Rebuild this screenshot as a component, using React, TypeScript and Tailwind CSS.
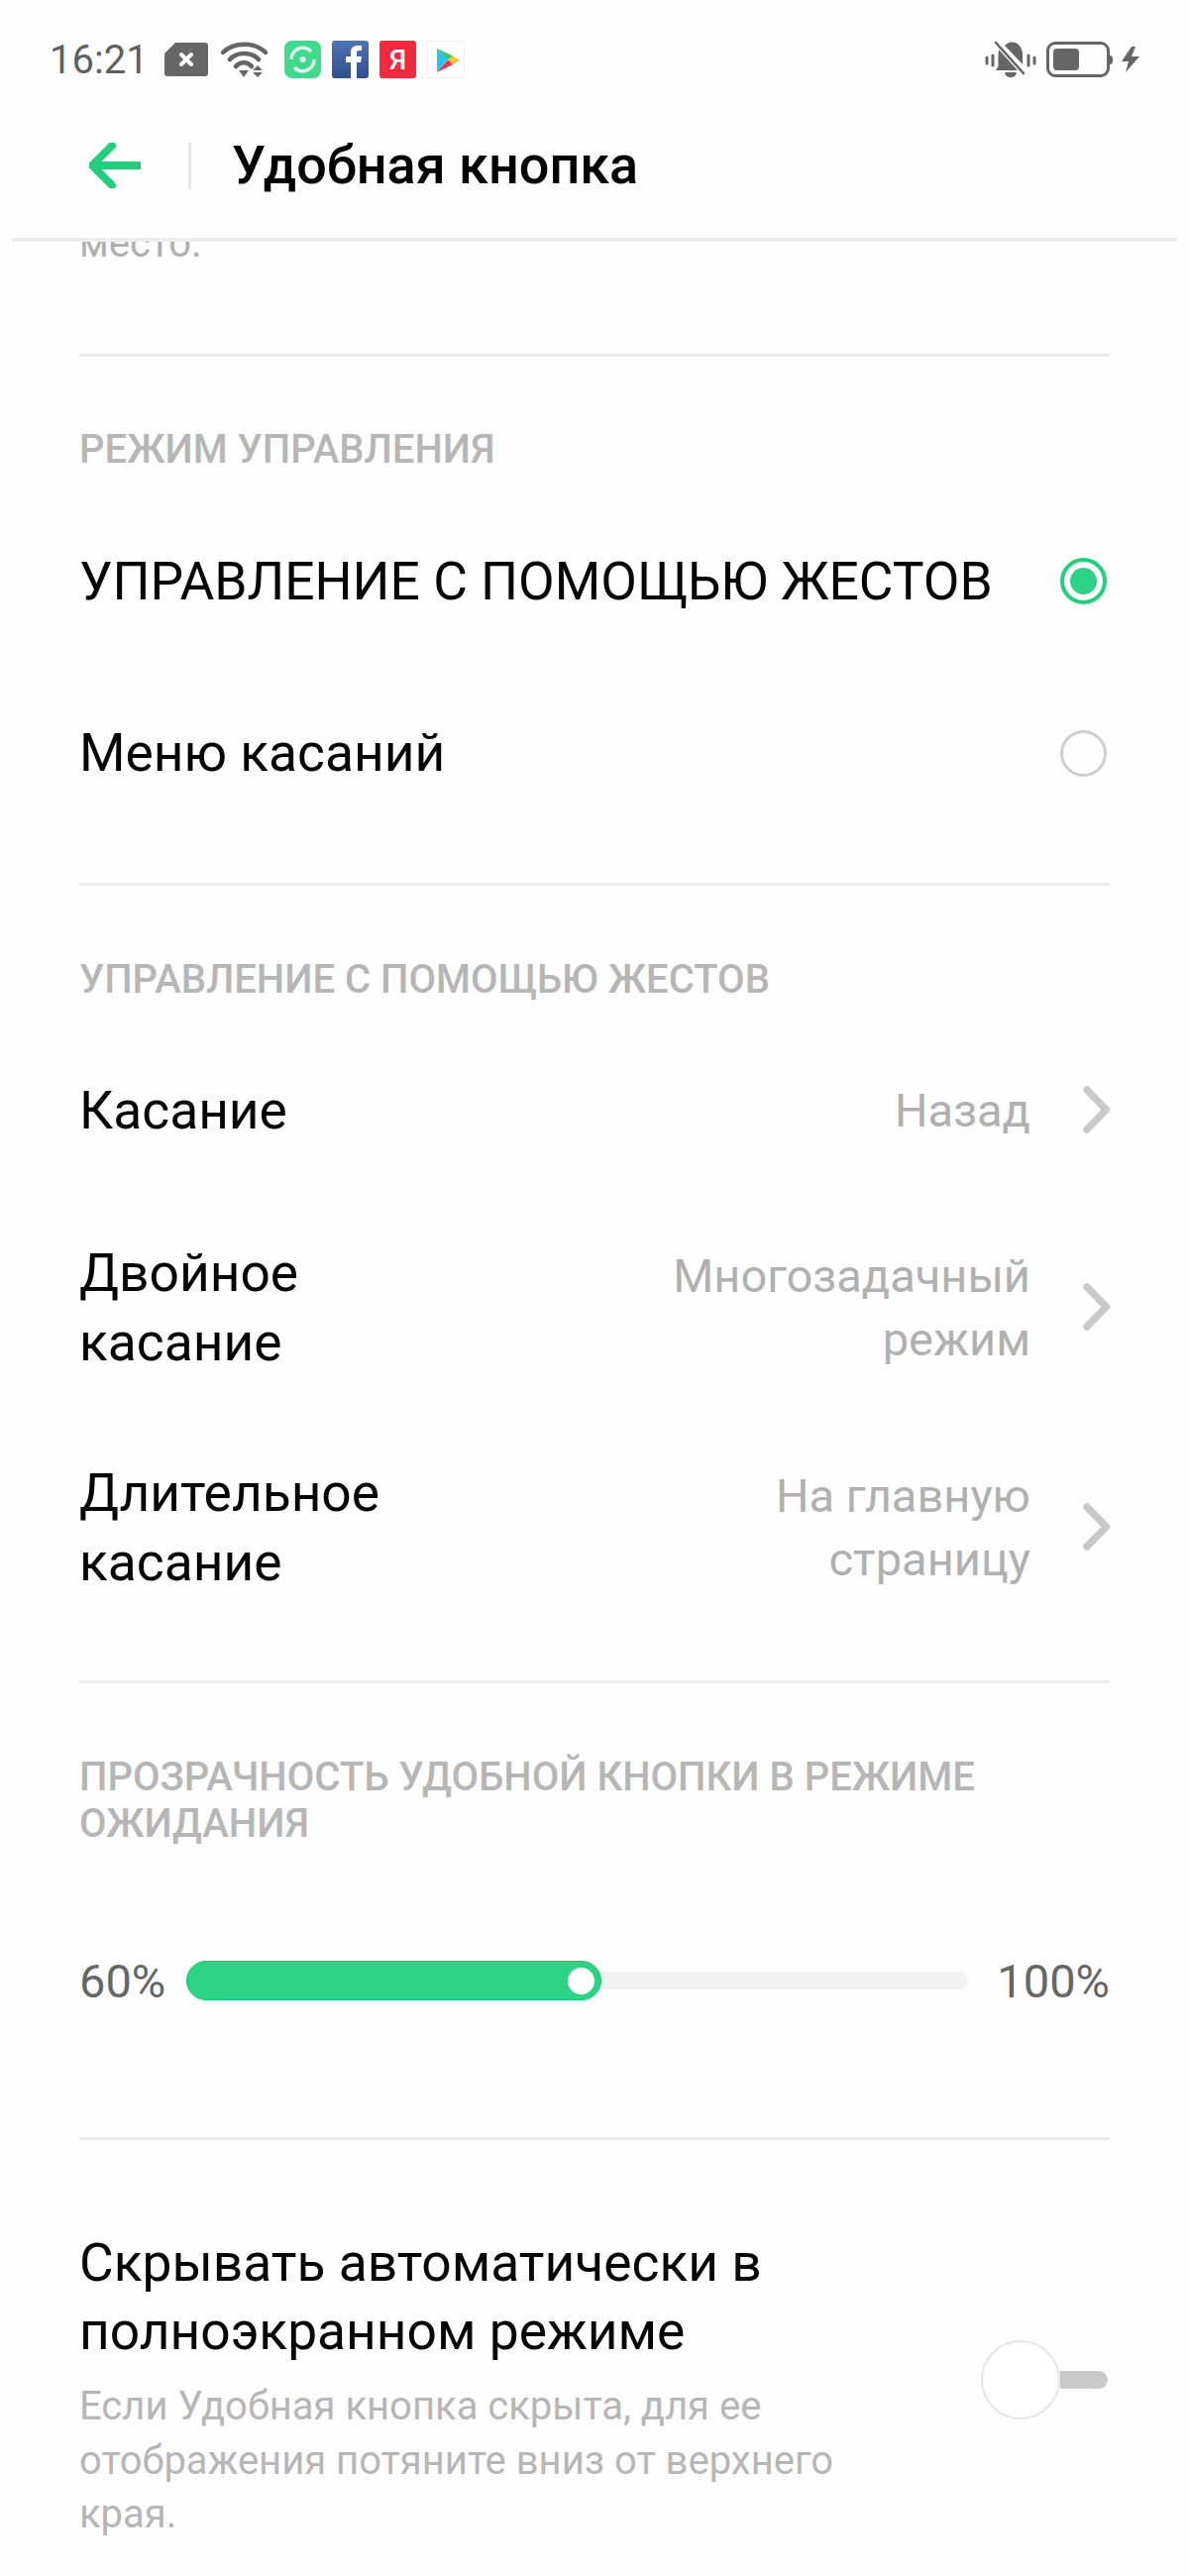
import React from "react";

const font = { fontFamily: "Roboto, 'Noto Sans', sans-serif" };

const Divider = () => <div className="h-[3px] mx-[80px] bg-[#ececec]" />;

const SectionTitle = ({ children }: { children: React.ReactNode }) => (
  <div className="px-[80px] text-[40px] leading-[47px] font-medium text-[#b6b6b6]">{children}</div>
);

const Chevron = () => (
  <svg width="28" height="48" viewBox="0 0 28 48" className="shrink-0">
    <path d="M4 4 L23.5 24 L4 44" fill="none" stroke="#c9c9c9" strokeWidth="7.5" strokeLinecap="round" strokeLinejoin="round" />
  </svg>
);

const Radio = ({ on }: { on?: boolean }) =>
  on ? (
    <div className="w-[47px] h-[47px] rounded-full border-[4px] border-[#1fd07f] flex items-center justify-center">
      <div className="w-[27px] h-[27px] rounded-full bg-[#2dd384]" />
    </div>
  ) : (
    <div className="w-[47px] h-[47px] rounded-full border-[3px] border-[#cecece]" />
  );

const StatusIcons = () => (
  <div className="flex items-center">
    {/* sim */}
    <svg width="44" height="34" viewBox="0 0 44 34" className="ml-[16px]">
      <path d="M11 0 H41 A3 3 0 0 1 44 3 V31 A3 3 0 0 1 41 34 H3 A3 3 0 0 1 0 31 V11 Z" fill="#666" />
      <path d="M17 12 L27 22 M27 12 L17 22" stroke="#fff" strokeWidth="4" strokeLinecap="round" />
    </svg>
    {/* wifi */}
    <svg width="47" height="37" viewBox="0 0 47 37" className="ml-[13px]">
      <g fill="none" stroke="#666" strokeWidth="4.5" strokeLinecap="round">
        <path d="M2 11 C13 0 34 0 45 11" />
        <path d="M9 18 C16 10 31 10 38 18" />
        <path d="M15 25 C19 20 27 20 31 25" />
      </g>
      <path d="M18 29 H28 L23 36 Z" fill="#666" />
      <path d="M37 24 L42 29 H32 Z M32 31 H42 L37 36 Z" fill="#666" />
    </svg>
    {/* sync app */}
    <svg width="37" height="38" viewBox="0 0 37 38" className="ml-[17px]">
      <rect width="37" height="38" rx="8" fill="#3fdb8b" />
      <path d="M7 19 A11.5 11.5 0 0 1 27 11" fill="none" stroke="#e4fbef" strokeWidth="3.5" />
      <path d="M30 19 A11.5 11.5 0 0 1 10 27" fill="none" stroke="#e4fbef" strokeWidth="3.5" />
      <circle cx="18.5" cy="19" r="3" fill="#e4fbef" />
    </svg>
    {/* facebook */}
    <svg width="37" height="38" viewBox="0 0 37 38" className="ml-[11px]">
      <defs>
        <linearGradient id="fb" x1="0" y1="0" x2="0" y2="1">
          <stop offset="0" stopColor="#4f74b8" />
          <stop offset="1" stopColor="#2f4f8f" />
        </linearGradient>
      </defs>
      <rect width="37" height="38" rx="3" fill="url(#fb)" />
      <path d="M19 38 V22 H14 V16 H19 V12 C19 7 22 5 26 5 H30 V10 H27 C25 10 25 11 25 13 V16 H30 L29 22 H25 V38 Z" fill="#fff" />
    </svg>
    {/* yandex */}
    <svg width="37" height="38" viewBox="0 0 37 38" className="ml-[11px]">
      <rect width="37" height="38" rx="3" fill="#f3283f" />
      <text x="18.5" y="29" textAnchor="middle" fontSize="28" fontWeight="500" fill="#fff" style={{ fontFamily: "Roboto, sans-serif" }}>Я</text>
    </svg>
    {/* play */}
    <svg width="38" height="38" viewBox="0 0 38 38" className="ml-[11px]">
      <rect x="0.5" y="0.5" width="37" height="37" rx="2" fill="#fff" stroke="#f0f0f0" />
      <path d="M10 8 L21 19 L10 32 Z" fill="#22c6ef" />
      <path d="M10 8 L26 15.5 L21 19.5 Z" fill="#39c56f" />
      <path d="M26 15.5 L33 20 L26 24 L21 19.5 Z" fill="#fbc02d" />
      <path d="M10 32 L21 19.5 L26 24 Z" fill="#e8344a" />
    </svg>
  </div>
);

const RightIcons = () => (
  <div className="flex items-center">
    {/* muted vibrate bell */}
    <svg width="52" height="38" viewBox="0 0 52 38">
      <path d="M15 6 L38 30 H11 L13.5 26 V14 C13.5 12 14 9 15 6 Z M20 5 C24 0 35 -1 38 12 V24 Z M20 32 H32 C31 39 21 39 20 32 Z" fill="#666" />
      <path d="M11 2 L40 34" stroke="#fff" strokeWidth="5" />
      <path d="M11 2 L39 33" stroke="#666" strokeWidth="2.6" strokeLinecap="round" />
      <path d="M2 17 V23 M8 15 V25 M44 15 V25 M50 17 V23" stroke="#666" strokeWidth="3" strokeLinecap="round" />
    </svg>
    {/* battery */}
    <div className="ml-[10px] flex items-center">
      <div className="w-[64px] h-[36px] rounded-[9px] border-[3px] border-[#666] p-[4px]">
        <div className="w-[26px] h-full rounded-[4px] bg-[#666]" />
      </div>
      <div className="w-[3px] h-[9px] rounded-r-[3px] bg-[#666]" />
    </div>
    {/* bolt */}
    <svg width="18" height="26" viewBox="0 0 18 26" className="ml-[9px]">
      <path d="M10 0 L0 15 H7 L4 26 L18 10 H10 L14 0 Z" fill="#666" />
    </svg>
  </div>
);

const ValueRow = ({ label, value, height }: { label: React.ReactNode; value: React.ReactNode; height: string }) => (
  <div className={`flex items-center justify-between pl-[80px] pr-[79px] ${height}`}>
    <div className="text-[53.3px] leading-[70px] text-[#050505]">{label}</div>
    <div className="flex items-center">
      <div className="text-[47px] leading-[64.5px] text-[#b0b0b0] text-right">{value}</div>
      <div className="ml-[53px] -mt-[3px]">
        <Chevron />
      </div>
    </div>
  </div>
);

export default function App() {
  return (
    <div className="w-[1200px] h-[2600px] overflow-hidden bg-[#fefefe]" style={font}>
      {/* status bar */}
      <div className="h-[120px] flex items-center justify-between pl-[50px] pr-[50px]">
        <div className="flex items-center">
          <span className="text-[40px] leading-[40px] pt-[2px] text-[#5f5f5f]">16:21</span>
          <StatusIcons />
        </div>
        <RightIcons />
      </div>

      {/* nav bar */}
      <div className="h-[120px] flex items-center pl-[90px] pb-[26px]">
        <svg width="52" height="46" viewBox="0 0 52 46">
          <path d="M50 23 H4 M23 3 L3 23 L23 43" fill="none" stroke="#22cf7e" strokeWidth="8" strokeLinecap="round" strokeLinejoin="round" />
        </svg>
        <div className="w-[3px] h-[47px] bg-[#e6e6e6] ml-[48px]" />
        <div className="ml-[41px] text-[54px] leading-[60px] font-medium text-black">Удобная кнопка</div>
      </div>
      <div className="h-[4px] mx-[12px] bg-[#eeeeee]" />

      {/* clipped line of the scrolled text */}
      <div className="h-[113px] overflow-hidden">
        <div className="-mt-[25px] px-[80px] text-[40px] leading-[54px] text-[#b0b0b0]">место.</div>
      </div>
      <Divider />

      <div className="pt-[70px]">
        <SectionTitle>РЕЖИМ УПРАВЛЕНИЯ</SectionTitle>
      </div>
      <div className="pt-[22px]">
        <div className="h-[174px] flex items-center justify-between pl-[80px] pr-[83px]">
          <span className="text-[53.3px] pt-[3px] text-[#050505]">УПРАВЛЕНИЕ С ПОМОЩЬЮ ЖЕСТОВ</span>
          <Radio on />
        </div>
        <div className="h-[174px] flex items-center justify-between pl-[80px] pr-[83px]">
          <span className="text-[53.3px] pt-[2px] text-[#050505]">Меню касаний</span>
          <Radio />
        </div>
      </div>
      <div className="pt-[44px]">
        <Divider />
      </div>

      <div className="pt-[71px]">
        <SectionTitle>УПРАВЛЕНИЕ С ПОМОЩЬЮ ЖЕСТОВ</SectionTitle>
      </div>
      <div className="pt-[21px]">
        <ValueRow label="Касание" value="Назад" height="h-[176px]" />
        <ValueRow
          label={<>Двойное<br />касание</>}
          value={<>Многозадачный<br />режим</>}
          height="h-[222px]"
        />
        <ValueRow
          label={<>Длительное<br />касание</>}
          value={<>На главную<br />страницу</>}
          height="h-[222px]"
        />
      </div>
      <div className="pt-[43px]">
        <Divider />
      </div>

      <div className="pt-[71px]">
        <SectionTitle>
          ПРОЗРАЧНОСТЬ УДОБНОЙ КНОПКИ В РЕЖИМЕ
          <br />
          ОЖИДАНИЯ
        </SectionTitle>
      </div>

      {/* slider */}
      <div className="mt-[115px] px-[80px] flex items-center h-[40px]">
        <span className="w-[108px] shrink-0 text-[47px] pt-[2px] text-[#666]">60%</span>
        <div className="flex-1 h-[18px] rounded-full bg-[#f2f2f2] flex items-center">
          <div className="w-[419px] h-[40px] shrink-0 rounded-full bg-[#2dd384] border border-[#10cb72] flex items-center justify-end pr-[6px]">
            <div className="w-[27px] h-[27px] rounded-full bg-white" />
          </div>
        </div>
        <span className="ml-[29px] text-[47px] pt-[2px] text-[#666]">100%</span>
      </div>

      <div className="pt-[138px]">
        <Divider />
      </div>

      {/* auto hide row */}
      <div className="flex items-start justify-between pl-[80px] pr-[82px] pt-[90px]">
        <div>
          <div className="text-[53.3px] leading-[69px] text-[#050505]">
            Скрывать автоматически в
            <br />
            полноэкранном режиме
          </div>
          <div className="mt-[14px] text-[40px] leading-[54.5px] text-[#b6b6b6]">
            Если Удобная кнопка скрыта, для ее
            <br />
            отображения потяните вниз от верхнего
            <br />
            края.
          </div>
        </div>
        <div className="mt-[112px] flex items-center">
          <div className="w-[80px] h-[80px] rounded-full border-[2px] border-[#e6e6e6] bg-white" />
          <div className="w-[48px] h-[18px] rounded-r-full bg-[#c9c9c9]" />
        </div>
      </div>
    </div>
  );
}
